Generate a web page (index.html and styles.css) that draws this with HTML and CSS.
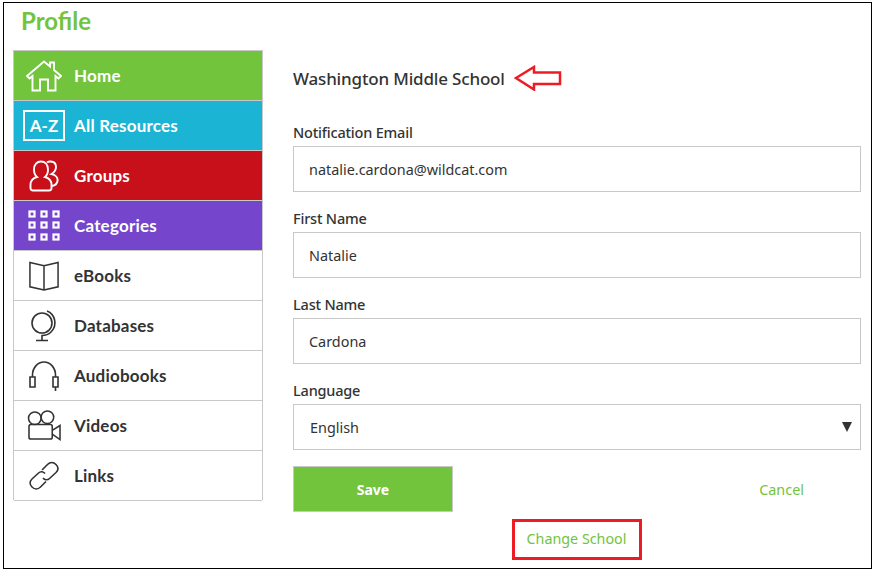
FILE: index.html
```html
<!DOCTYPE html>
<html>
<head>
    <meta charset="UTF-8">
    <title>Profile</title>
    <link rel="stylesheet" href="styles.css">
</head>
<body>
    <div class="frame">
        <h1 class="title">Profile</h1>
        <div class="columns">
            <ul class="menu">
                <li class="menu-item home">
                    <span class="icon"><svg width="36" height="32" viewBox="0 0 36 32"><path d="M1 16 18 1.500 24 6.500V2.500H28V10L35 16 32.500 18.500 29.500 16V30.500H22V19.500H14V30.500H6.500V16L3.500 18.500Z"/></svg></span>
                    <span>Home</span>
                </li>
                <li class="menu-item resources">
                    <span class="icon"><svg width="42" height="32" viewBox="0 0 42 32"><rect x="1" y="1" width="40" height="29"/></svg><span class="az">A-Z</span></span>
                    <span>All Resources</span>
                </li>
                <li class="menu-item groups">
                    <span class="icon"><svg width="30" height="32" viewBox="0 0 30 32"><path d="M8 17C5.500 15 5 12 5 9.500 5 4.500 8 1.500 12 1.500S19 4.500 19 9.500C19 12 18.500 15 16 17 20 18 22.500 21 22.500 25V28C22.500 29.500 21.500 30.500 20 30.500H4C2.500 30.500 1.500 29.500 1.500 28V25C1.500 21 4 18 8 17ZM18 2.500C20 1 27 .5 27 7 27 10.500 25 12.500 22.500 14 27 15 29 18 28.500 21 28 24 26 25.500 23 26"/></svg></span>
                    <span>Groups</span>
                </li>
                <li class="menu-item categories">
                    <span class="icon"><svg class="dots" width="32" height="31" viewBox="0 0 32 31"><rect x="1.500" y="1.500" width="5" height="5"/><rect x="13.500" y="1.500" width="5" height="5"/><rect x="25.500" y="1.500" width="5" height="5"/><rect x="1.500" y="12.500" width="5" height="5"/><rect x="13.500" y="12.500" width="5" height="5"/><rect x="25.500" y="12.500" width="5" height="5"/><rect x="1.500" y="24.500" width="5" height="5"/><rect x="13.500" y="24.500" width="5" height="5"/><rect x="25.500" y="24.500" width="5" height="5"/></svg></span>
                    <span>Categories</span>
                </li>
                <li class="menu-item">
                    <span class="icon"><svg width="30" height="32" viewBox="0 0 32 32"><path d="M1 1.500 16 5 31 1.500V27.500L16 31 1 27.500ZM16 5V31"/></svg></span>
                    <span>eBooks</span>
                </li>
                <li class="menu-item">
                    <span class="icon"><svg width="28" height="32" viewBox="0 0 28 32"><circle cx="12" cy="13" r="10"/><path d="M17 1C25 4 28 15 21 22 18.500 24.500 15 25.500 12 25.500V30.500M6 30.500H18"/></svg></span>
                    <span>Databases</span>
                </li>
                <li class="menu-item">
                    <span class="icon"><svg width="32" height="32" viewBox="0 0 32 32"><path d="M4.500 17V15C4.500 8 9.500 2 16 2S27.500 8 27.500 15V17M2 17H7V27H2ZM25 17H30V27H25ZM27.500 27V31"/></svg></span>
                    <span>Audiobooks</span>
                </li>
                <li class="menu-item">
                    <span class="icon"><svg width="35" height="31" viewBox="0 0 36 32"><circle cx="8" cy="8.500" r="6.500"/><circle cx="21" cy="7.500" r="6.500"/><rect x="2" y="15" width="24" height="15" rx="2"/><path d="M26 21 34 16V30.500L26 25"/></svg></span>
                    <span>Videos</span>
                </li>
                <li class="menu-item">
                    <span class="icon"><svg width="32" height="32" viewBox="0 0 32 32"><path d="M14 10 19.500 4.500C22 2 25.500 2 28 4.500S30.500 10 28 12.500L21.500 18.500C19.500 20.500 16.500 20 15 18M18 21.500 12.500 27C10 29.500 6.500 29.500 4 27S1.500 21.500 4 19L10.500 13C12.500 11 15.500 11.500 17 13.500"/></svg></span>
                    <span>Links</span>
                </li>
            </ul>
            <form class="profile">
                <div class="school">
                    <h2>Washington Middle School</h2>
                    <svg class="arrow" width="48" height="26" viewBox="0 0 48 26"><path d="M2 13 20 2V7.500H46V19H20V24.500Z"/></svg>
                </div>
                <div class="form-group">
                    <label for="email">Notification Email</label>
                    <input type="text" id="email" value="natalie.cardona@wildcat.com">
                </div>
                <div class="form-group">
                    <label for="firstName">First Name</label>
                    <input type="text" id="firstName" value="Natalie">
                </div>
                <div class="form-group">
                    <label for="lastName">Last Name</label>
                    <input type="text" id="lastName" value="Cardona">
                </div>
                <div class="form-group">
                    <label for="language">Language</label>
                    <div class="select-wrap">
                        <select id="language">
                            <option>English</option>
                        </select>
                    </div>
                </div>
                <div class="actions">
                    <button type="button" class="save">Save</button>
                    <a class="cancel">Cancel</a>
                </div>
                <div class="change-row">
                    <a class="change">Change School</a>
                </div>
            </form>
        </div>
    </div>
</body>
</html>
```

FILE: styles.css
```css
* { box-sizing: border-box; }
html, body { margin: 0; height: 100%; background: #fff; }
body { font-family: "Noto Sans", Arial, sans-serif; color: #333; overflow: hidden; }
.frame { width: 869px; height: 567px; margin: 2px 0 0 3px; border: 1.5px solid #000; padding: 0 9px 0 9px; }
.title { margin: 0; height: 47px; padding: 3px 0 0 8px; font-family: "Lato", sans-serif; font-size: 24px; line-height: 30px; font-weight: 700; color: #72c43c; }
.columns { display: flex; gap: 30px; }
.menu { list-style: none; margin: 0; padding: 0; width: 250px; border: 1px solid #c8c8c8; border-bottom: none; flex: none; height: 450px; }
.menu-item { display: flex; align-items: center; height: 50px; border-bottom: 1px solid #c8c8c8; font-family: "Lato", sans-serif; font-size: 17px; font-weight: 700; letter-spacing: .2px; color: #333; }
.icon { position: relative; width: 60px; height: 49px; flex: none; display: flex; align-items: center; justify-content: center; letter-spacing: 0; }
.icon svg { fill: none; stroke: #333; stroke-width: 1.6; }
.home, .resources, .groups, .categories { color: #fff; }
.home svg, .resources svg, .groups svg, .categories svg { stroke: #fff; stroke-width: 1.9; }
.home { background: #72c43c; }
.resources { background: #1cb4d4; }
.groups { background: #c8101a; }
.categories { background: #7545cc; }
.resources svg { stroke-width: 2; }
.categories .dots { stroke-width: 2.2; }
.az { position: absolute; left: 0; right: 0; top: 15px; text-align: center; font-size: 17px; line-height: 20px; }
.profile { width: 568px; flex: none; }
.school { display: flex; align-items: center; gap: 9px; height: 52px; margin-top: 2px; margin-bottom: 10px; }
.school h2 { margin: 0; font-size: 17px; letter-spacing: -.17px; font-weight: 500; color: #333; }
.arrow { fill: #fff; stroke: #ed1c24; stroke-width: 2.500; }
.form-group { height: 86px; padding-top: 6px; }
label { display: block; height: 26px; line-height: 24px; font-size: 14.5px; letter-spacing: -.2px; font-weight: 500; color: #333; }
input[type="text"], select { width: 100%; height: 46px; padding: 0 15px; border: 1px solid #c8c8c8; border-radius: 0; background: #fff; font-family: "Noto Sans", Arial, sans-serif; font-size: 14.4px; color: #333; outline: none; appearance: none; }
select { padding-left: 16px; }
.select-wrap { position: relative; }
.select-wrap::after { content: ""; position: absolute; right: 9px; top: 18px; border-left: 5px solid transparent; border-right: 5px solid transparent; border-top: 10px solid #333; }
.actions { display: flex; align-items: center; justify-content: space-between; padding-right: 57px; margin-top: 8px; }
.save { width: 160px; height: 46px; background: #72c43c; border: 1px solid #c8c8c8; color: #fff; font-family: "Noto Sans", Arial, sans-serif; font-size: 14px; font-weight: 700; }
.cancel { color: #72c43c; font-size: 14.4px; }
.change-row { display: flex; justify-content: center; margin-top: 7px; padding-right: 1px; }
.change { display: block; width: 130px; height: 41px; line-height: 33px; border: 3px solid #ed1c24; text-align: center; color: #72c43c; font-size: 14.300px; }
```
